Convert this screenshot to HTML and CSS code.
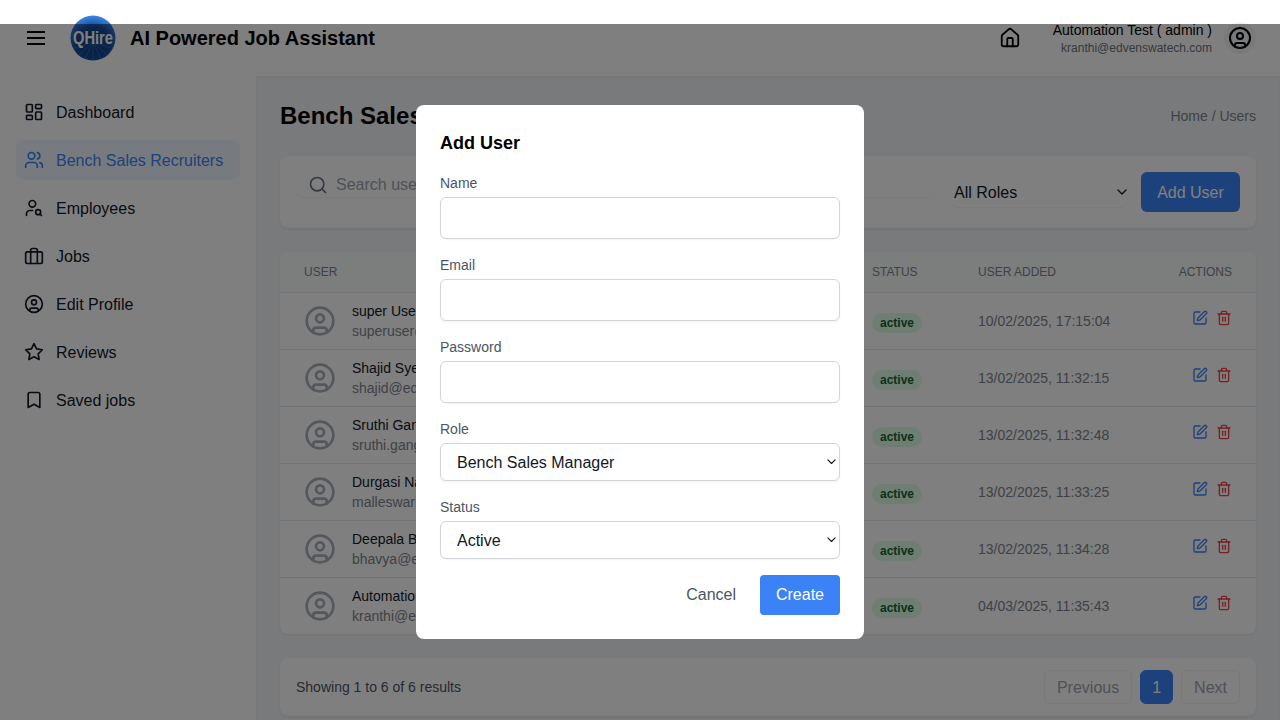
FILE: index.html
```html
<!DOCTYPE html>
<html lang="en">
<head>
<meta charset="utf-8">
<title>Users</title>
<link rel="stylesheet" href="styles.css">
</head>
<body>
<svg class="sprite" width="0" height="0" aria-hidden="true">
  <defs>
    <symbol id="i-user" viewBox="0 0 24 24"><circle cx="12" cy="12" r="10"/><circle cx="12" cy="10" r="3"/><path d="M7 20.662V19a2 2 0 0 1 2-2h6a2 2 0 0 1 2 2v1.662"/></symbol>
    <symbol id="i-edit" viewBox="0 0 24 24"><path d="M12 3H5a2 2 0 0 0-2 2v14a2 2 0 0 0 2 2h14a2 2 0 0 0 2-2v-7"/><path d="M18.375 2.625a1 1 0 0 1 3 3l-9.013 9.014a2 2 0 0 1-.853.505l-2.873.84a.5.5 0 0 1-.62-.62l.84-2.873a2 2 0 0 1 .506-.852z"/></symbol>
    <symbol id="i-trash" viewBox="0 0 24 24"><path d="M3 6h18"/><path d="M19 6v14c0 1-1 2-2 2H7c-1 0-2-1-2-2V6"/><path d="M8 6V4c0-1 1-2 2-2h4c1 0 2 1 2 2v2"/><path d="M10 11v6"/><path d="M14 11v6"/></symbol>
    <symbol id="i-chevron" viewBox="0 0 10 6"><path d="M1 1l4 4 4-4"/></symbol>
  </defs>
</svg>
<div class="app">
  <header class="topbar">
    <div class="brand">
      <svg class="icon menu-icon" viewBox="0 0 24 24"><path d="M3 6h18M3 12h18M3 18h18"/></svg>
      <svg class="logo" viewBox="0 0 46 46">
        <defs>
          <radialGradient id="logoFill" cx="50%" cy="62%" r="62%">
            <stop offset="0" stop-color="#0d3f86"/>
            <stop offset="0.6" stop-color="#144a96"/>
            <stop offset="1" stop-color="#3d86e6"/>
          </radialGradient>
        </defs>
        <circle class="logo-disc" cx="23" cy="23" r="22.5" fill="url(#logoFill)"/>
        <path class="logo-rays" d="M23 27 8 41M23 27l-8 17M23 27v18M23 27l8 17M23 27l15 14M23 27 5 33M23 27l18 6"/>
        <text class="logo-text" x="3" y="29" textLength="40" lengthAdjust="spacingAndGlyphs">QHire</text>
      </svg>
      <h1 class="app-title">AI Powered Job Assistant</h1>
    </div>
    <div class="account">
      <svg class="icon home-icon" viewBox="0 0 24 24"><path d="M15 21v-8a1 1 0 0 0-1-1h-4a1 1 0 0 0-1 1v8"/><path d="M3 10a2 2 0 0 1 .709-1.528l7-5.999a2 2 0 0 1 2.582 0l7 5.999A2 2 0 0 1 21 10v9a2 2 0 0 1-2 2H5a2 2 0 0 1-2-2z"/></svg>
      <div class="account-text">
        <div class="account-name">Automation Test ( admin )</div>
        <div class="account-mail">kranthi@edvenswatech.com</div>
      </div>
      <div class="avatar-btn"><svg class="icon avatar-icon"><use href="#i-user"/></svg></div>
    </div>
  </header>
  <div class="body-row">
    <nav class="sidebar">
      <a class="nav-item"><svg class="icon nav-icon" viewBox="0 0 24 24"><rect x="3" y="3" width="7" height="9" rx="1"/><rect x="14" y="3" width="7" height="5" rx="1"/><rect x="14" y="12" width="7" height="9" rx="1"/><rect x="3" y="16" width="7" height="5" rx="1"/></svg><span class="nav-label">Dashboard</span></a>
      <a class="nav-item is-active"><svg class="icon nav-icon" viewBox="0 0 24 24"><path d="M16 21v-2a4 4 0 0 0-4-4H6a4 4 0 0 0-4 4v2"/><circle cx="9" cy="7" r="4"/><path d="M22 21v-2a4 4 0 0 0-3-3.87"/><path d="M16 3.13a4 4 0 0 1 0 7.75"/></svg><span class="nav-label">Bench Sales Recruiters</span></a>
      <a class="nav-item"><svg class="icon nav-icon" viewBox="0 0 24 24"><circle cx="10" cy="7" r="4"/><path d="M10.3 15H7a4 4 0 0 0-4 4v2"/><circle cx="17" cy="17" r="3"/><path d="m21 21-1.9-1.9"/></svg><span class="nav-label">Employees</span></a>
      <a class="nav-item"><svg class="icon nav-icon" viewBox="0 0 24 24"><rect x="2" y="7" width="20" height="14" rx="2"/><path d="M16 21V5a2 2 0 0 0-2-2h-4a2 2 0 0 0-2 2v16"/></svg><span class="nav-label">Jobs</span></a>
      <a class="nav-item"><svg class="icon nav-icon"><use href="#i-user"/></svg><span class="nav-label">Edit Profile</span></a>
      <a class="nav-item"><svg class="icon nav-icon" viewBox="0 0 24 24"><path d="M12 2l3.09 6.26L22 9.27l-5 4.87 1.18 6.88L12 17.77l-6.18 3.25L7 14.14 2 9.27l6.91-1.01z"/></svg><span class="nav-label">Reviews</span></a>
      <a class="nav-item"><svg class="icon nav-icon" viewBox="0 0 24 24"><path d="m19 21-7-4-7 4V5a2 2 0 0 1 2-2h10a2 2 0 0 1 2 2v16z"/></svg><span class="nav-label">Saved jobs</span></a>
    </nav>
    <main class="content">
      <div class="page-head">
        <h2 class="page-title">Bench Sales Recruiters</h2>
        <div class="crumbs">Home / Users</div>
      </div>
      <section class="card toolbar">
        <div class="search">
          <svg class="icon search-icon" viewBox="0 0 24 24"><circle cx="11" cy="11" r="8"/><path d="m21 21-4.3-4.3"/></svg>
          <span class="search-text">Search users...</span>
        </div>
        <div class="role-wrap">
          <select class="role-filter"><option>All Roles</option></select>
          <svg class="icon chevron role-chevron"><use href="#i-chevron"/></svg>
        </div>
        <button class="add-btn">Add User</button>
      </section>
      <section class="card table">
        <div class="row head-row">
          <div>User</div><div>Status</div><div>User Added</div><div class="cell-end">Actions</div>
        </div>
        <div class="row">
          <div class="user-cell"><svg class="icon user-icon"><use href="#i-user"/></svg><div><div class="user-name">super User</div><div class="user-mail">superuser@edvenswatech.com</div></div></div>
          <div><span class="badge">active</span></div>
          <div class="date">10/02/2025, 17:15:04</div>
          <div class="actions"><svg class="icon act-icon edit"><use href="#i-edit"/></svg><svg class="icon act-icon trash"><use href="#i-trash"/></svg></div>
        </div>
        <div class="row">
          <div class="user-cell"><svg class="icon user-icon"><use href="#i-user"/></svg><div><div class="user-name">Shajid Syed</div><div class="user-mail">shajid@edvenswatech.com</div></div></div>
          <div><span class="badge">active</span></div>
          <div class="date">13/02/2025, 11:32:15</div>
          <div class="actions"><svg class="icon act-icon edit"><use href="#i-edit"/></svg><svg class="icon act-icon trash"><use href="#i-trash"/></svg></div>
        </div>
        <div class="row">
          <div class="user-cell"><svg class="icon user-icon"><use href="#i-user"/></svg><div><div class="user-name">Sruthi Ganga</div><div class="user-mail">sruthi.ganga@edvenswatech.com</div></div></div>
          <div><span class="badge">active</span></div>
          <div class="date">13/02/2025, 11:32:48</div>
          <div class="actions"><svg class="icon act-icon edit"><use href="#i-edit"/></svg><svg class="icon act-icon trash"><use href="#i-trash"/></svg></div>
        </div>
        <div class="row">
          <div class="user-cell"><svg class="icon user-icon"><use href="#i-user"/></svg><div><div class="user-name">Durgasi Naga</div><div class="user-mail">malleswari@edvenswatech.com</div></div></div>
          <div><span class="badge">active</span></div>
          <div class="date">13/02/2025, 11:33:25</div>
          <div class="actions"><svg class="icon act-icon edit"><use href="#i-edit"/></svg><svg class="icon act-icon trash"><use href="#i-trash"/></svg></div>
        </div>
        <div class="row">
          <div class="user-cell"><svg class="icon user-icon"><use href="#i-user"/></svg><div><div class="user-name">Deepala Bhavya</div><div class="user-mail">bhavya@edvenswatech.com</div></div></div>
          <div><span class="badge">active</span></div>
          <div class="date">13/02/2025, 11:34:28</div>
          <div class="actions"><svg class="icon act-icon edit"><use href="#i-edit"/></svg><svg class="icon act-icon trash"><use href="#i-trash"/></svg></div>
        </div>
        <div class="row">
          <div class="user-cell"><svg class="icon user-icon"><use href="#i-user"/></svg><div><div class="user-name">Automation Test</div><div class="user-mail">kranthi@edvenswatech.com</div></div></div>
          <div><span class="badge">active</span></div>
          <div class="date">04/03/2025, 11:35:43</div>
          <div class="actions"><svg class="icon act-icon edit"><use href="#i-edit"/></svg><svg class="icon act-icon trash"><use href="#i-trash"/></svg></div>
        </div>
      </section>
      <section class="card pager">
        <div class="pager-info">Showing 1 to 6 of 6 results</div>
        <div class="pager-btns">
          <span class="page-btn">Previous</span>
          <span class="page-btn is-current">1</span>
          <span class="page-btn">Next</span>
        </div>
      </section>
    </main>
  </div>
</div>
<div class="overlay">
  <form class="modal">
    <h3 class="modal-title">Add User</h3>
    <div class="field"><label class="field-label">Name</label><input class="text-input" type="text"></div>
    <div class="field"><label class="field-label">Email</label><input class="text-input" type="text"></div>
    <div class="field"><label class="field-label">Password</label><input class="text-input" type="text"></div>
    <div class="field"><label class="field-label">Role</label><div class="select-wrap"><select class="select-input"><option>Bench Sales Manager</option></select><svg class="icon chevron modal-chevron"><use href="#i-chevron"/></svg></div></div>
    <div class="field"><label class="field-label">Status</label><div class="select-wrap"><select class="select-input"><option>Active</option></select><svg class="icon chevron modal-chevron"><use href="#i-chevron"/></svg></div></div>
    <div class="modal-actions">
      <button type="button" class="cancel-btn">Cancel</button>
      <button type="button" class="create-btn">Create</button>
    </div>
  </form>
</div>
</body>
</html>
```
FILE: styles.css
```css
* { box-sizing: border-box; }
html, body { margin: 0; height: 100%; overflow: hidden; }
body { font-family: "Liberation Sans", Arial, sans-serif; font-size: 16px; color: #111827; background: #fff; }
.sprite { display: block; height: 0; }
.icon { fill: none; stroke: currentColor; stroke-width: 2; stroke-linecap: round; stroke-linejoin: round; flex: none; display: block; }
.app { height: 100%; display: flex; flex-direction: column; }

.topbar { height: 76px; flex: none; display: flex; justify-content: space-between; align-items: center; padding: 0 24px; background: #fff; }
.brand { display: flex; align-items: center; }
.menu-icon { width: 24px; height: 24px; color: #000; stroke-linecap: butt; margin-right: 22px; }
.logo { width: 46px; height: 46px; margin-right: 14px; margin-top: -1px; overflow: visible; }
.logo-disc { filter: blur(.6px); }
.logo-rays { fill: none; stroke: #5f93d8; stroke-width: .7; opacity: .55; }
.logo-text { font-family: "Liberation Sans", Arial, sans-serif; font-size: 19px; font-weight: 700; fill: #fff; }
.app-title { margin: 0; font-size: 20px; line-height: 28px; font-weight: 700; color: #000; }
.account { display: flex; align-items: center; }
.home-icon { width: 22px; height: 22px; color: #000; margin-right: 32px; }
.account-text { text-align: right; margin-right: 12px; }
.account-name { font-size: 14px; line-height: 20px; color: #000; }
.account-mail { font-size: 12px; line-height: 16px; color: #6b7280; }
.avatar-btn { width: 32px; height: 32px; border-radius: 50%; background: #f3f4f6; display: flex; align-items: center; justify-content: center; }
.avatar-icon { width: 24px; height: 24px; color: #000; }

.body-row { flex: 1; display: flex; min-height: 0; }
.sidebar { width: 256px; flex: none; padding: 16px; display: flex; flex-direction: column; gap: 8px; background: #fff; }
.nav-item { height: 40px; display: flex; align-items: center; gap: 12px; padding: 0 8px; border-radius: 8px; color: #111827; }
.nav-icon { width: 20px; height: 20px; }
.nav-label { padding-top: 2px; }
.is-active { background: #eff6ff; color: #3b82f6; }

.content { flex: 1; padding: 24px; background: #f3f4f6; box-shadow: inset 0 1px 2px rgba(0,0,0,.05); display: flex; flex-direction: column; gap: 24px; min-width: 0; }
.page-head { display: flex; justify-content: space-between; align-items: center; height: 32px; }
.page-title { margin: 0; font-size: 24px; line-height: 32px; font-weight: 700; color: #000; }
.crumbs { font-size: 14px; color: #7d838e; }
.card { background: #fff; border-radius: 8px; box-shadow: 0 1px 2px rgba(0,0,0,.08); }

.toolbar { height: 72px; padding: 16px; display: flex; gap: 16px; align-items: flex-start; flex: none; }
.search { flex: 1; height: 25px; display: flex; align-items: center; gap: 8px; padding-left: 12px; border-radius: 8px; box-shadow: 0 1px 1px rgba(0,0,0,.05); }
.search-icon { width: 20px; height: 20px; color: #6b7280; }
.search-text { color: #9ca3af; }
.role-wrap { position: relative; width: 178px; height: 30px; margin-top: 5px; margin-right: -3px; }
.role-filter { appearance: none; width: 100%; height: 100%; border: 0; background: #fff; font: 16px "Liberation Sans", Arial, sans-serif; color: #111827; border-radius: 8px; box-shadow: 0 1px 1px rgba(0,0,0,.05); padding: 0 0 0 4px; }
.chevron { position: absolute; pointer-events: none; color: #111827; stroke-width: 1.25; }
.role-chevron { width: 10px; height: 6px; right: 1px; top: 12px; }
.add-btn { width: 99px; height: 40px; padding: 2px 0 0; border: 0; border-radius: 6px; background: #3b82f6; color: #fff; font: 16px "Liberation Sans", Arial, sans-serif; }

.table { flex: none; overflow: hidden; }
.row { display: grid; grid-template-columns: 568px 106px 1fr auto; align-items: center; padding: 0 24px; height: 57px; border-bottom: 1px solid #e5e7eb; }
.row:last-child { border-bottom: 0; height: 56px; }
.head-row { height: 41px; font-size: 12px; text-transform: uppercase; color: #7d838e; background: #f9fafb; }
.cell-end { text-align: right; }
.user-cell { display: flex; align-items: center; gap: 16px; }
.user-icon { width: 32px; height: 32px; color: #a8afba; }
.user-name { font-size: 14px; line-height: 20px; color: #111827; }
.user-mail { font-size: 14px; line-height: 20px; color: #7d838e; white-space: nowrap; }
.badge { display: inline-block; height: 20px; line-height: 20px; padding: 0 8px; border-radius: 10px; background: #dcfce7; color: #166534; font-size: 12px; font-weight: 700; position: relative; top: 2px; }
.date { font-size: 14px; color: #7d838e; }
.actions { display: flex; gap: 8px; margin-bottom: 7px; }
.act-icon { width: 16px; height: 16px; }
.edit { color: #3b82f6; }
.trash { color: #ef4444; }

.pager { height: 58px; padding: 0 16px; display: flex; justify-content: space-between; align-items: center; flex: none; }
.pager-info { font-size: 14px; color: #4b5563; }
.pager-btns { display: flex; gap: 8px; }
.page-btn { height: 34px; line-height: 34px; padding: 0 12px; border: 1px solid #f1f2f4; border-radius: 6px; color: #9ca3af; }
.page-btn.is-current { padding: 0 11px; background: #3b82f6; border-color: #3b82f6; color: #fff; }

.overlay { position: fixed; inset: 24px 0 0 0; background: rgba(0,0,0,.5); backdrop-filter: blur(.6px); display: flex; align-items: center; justify-content: center; }
.modal { width: 448px; padding: 24px; background: #fff; border-radius: 8px; display: flex; flex-direction: column; gap: 16px; }
.modal-title { margin: 0; font-size: 18px; line-height: 28px; font-weight: 700; color: #000; }
.field { display: flex; flex-direction: column; gap: 4px; }
.field-label { font-size: 14px; line-height: 20px; color: #4b5563; }
.text-input { height: 42px; border: 1px solid #d1d5db; border-radius: 6px; background: #fff; box-shadow: 0 1px 2px rgba(0,0,0,.05); }
.select-wrap { position: relative; }
.select-input { appearance: none; display: block; width: 100%; height: 38px; border: 1px solid #d1d5db; border-radius: 6px; background: #fff; padding: 0 16px; font: 16px "Liberation Sans", Arial, sans-serif; color: #111827; box-shadow: 0 1px 2px rgba(0,0,0,.05); }
.modal-chevron { width: 9px; height: 5.4px; right: 4px; top: 16px; }
.modal-actions { display: flex; justify-content: flex-end; gap: 8px; }
.cancel-btn { height: 40px; padding: 0 16px; border: 0; background: none; font: 16px "Liberation Sans", Arial, sans-serif; color: #4b5563; }
.create-btn { width: 80px; height: 40px; border: 0; border-radius: 4px; background: #3b82f6; color: #fff; font: 16px "Liberation Sans", Arial, sans-serif; }
```
